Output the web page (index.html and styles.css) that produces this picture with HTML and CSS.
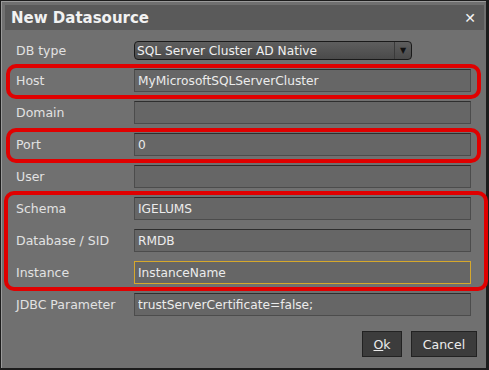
FILE: index.html
```html
<!DOCTYPE html>
<html lang="en">
<head>
    <meta charset="UTF-8">
    <title>New Datasource</title>
    <link rel="stylesheet" href="styles.css">
</head>
<body>
    <div class="dialog">
        <div class="title-bar">
            <span class="title">New Datasource</span>
            <span class="close">&#x2715;</span>
        </div>

        <form class="form">
            <div class="row row-first">
                <label>DB type</label>
                <div class="select">
                    <span class="select-text">SQL Server Cluster AD Native</span>
                    <span class="select-arrow">&#9660;</span>
                </div>
            </div>

            <div class="row mark">
                <label>Host</label>
                <input type="text" class="field" value="MyMicrosoftSQLServerCluster">
            </div>
            <div class="row">
                <label>Domain</label>
                <input type="text" class="field" value="">
            </div>
            <div class="row mark">
                <label>Port</label>
                <input type="text" class="field" value="0">
            </div>
            <div class="row">
                <label>User</label>
                <input type="text" class="field" value="">
            </div>

            <div class="group mark mark-wide">
                <div class="row">
                    <label>Schema</label>
                    <input type="text" class="field" value="IGELUMS">
                </div>
                <div class="row">
                    <label>Database / SID</label>
                    <input type="text" class="field" value="RMDB">
                </div>
                <div class="row">
                    <label>Instance</label>
                    <input type="text" class="field field-focus" value="InstanceName">
                </div>
            </div>

            <div class="row">
                <label>JDBC Parameter</label>
                <input type="text" class="field" value="trustServerCertificate=false;">
            </div>

            <div class="button-container">
                <button type="button" class="btn btn-ok"><u>O</u>k</button>
                <button type="button" class="btn btn-cancel">Cancel</button>
            </div>
        </form>
    </div>
</body>
</html>
```

FILE: styles.css
```css
/* khung hop thoai */
body {
    margin: 0;
    background: #1e1e1e;
    font-family: "DejaVu Sans", Verdana, sans-serif;
}

.dialog {
    width: 489px;
    height: 370px;
    box-sizing: border-box;
    background: #707070;
    border-top: 1px solid #1c1c1c;
    border-left: 1px solid #1c1c1c;
    border-right: 3px solid #1c1c1c;
    border-bottom: 2px solid #1c1c1c;
    box-shadow: inset 1px 1px 0 #9a9a9a;
    padding: 4px 2px 0 4px;
}

.title-bar {
    height: 25px;
    background: #5a5a5a;
    display: flex;
    align-items: center;
    justify-content: space-between;
    padding: 0 8px 0 6px;
}

.title {
    color: #f2f2f2;
    font-weight: bold;
    font-size: 15px;
}

.close {
    color: #f4f4f4;
    font-weight: bold;
    font-size: 14px;
}

.form {
    display: flex;
    flex-direction: column;
    gap: 9px;
    padding: 11px 13px 0 11px;
}

.group {
    display: flex;
    flex-direction: column;
    gap: 9px;
}

.row {
    display: flex;
    align-items: center;
    height: 23px;
}

.row-first {
    height: 19px;
}

.row label {
    width: 118px;
    flex: none;
    color: #e2e2e2;
    font-size: 12.5px;
}

.field {
    flex: 1;
    height: 23px;
    box-sizing: border-box;
    margin: 0;
    padding: 0 3px;
    background: #666666;
    border: 1px solid #4c4c4c;
    border-top-color: #2e2e2e;
    color: #ececec;
    font-family: inherit;
    font-size: 12.2px;
    outline: none;
}

.field-focus {
    border: 1px solid #d6a82c;
}

/* o chon kieu DB */
.select {
    width: 278px;
    height: 19px;
    box-sizing: border-box;
    display: flex;
    align-items: center;
    border: 1px solid #1a1a1a;
    border-radius: 4px;
    background: linear-gradient(#5e5e5e, #4a4a4a);
    color: #f0f0f0;
    font-size: 12.2px;
}

.select-text {
    flex: 1;
    padding-left: 2px;
}

.select-arrow {
    width: 16px;
    height: 17px;
    border-left: 1px solid #3a3a3a;
    display: flex;
    align-items: center;
    justify-content: center;
    color: #111;
    font-size: 8px;
}

/* khung do danh dau */
.mark {
    position: relative;
}

.mark::after {
    content: "";
    position: absolute;
    top: -5px;
    bottom: -7px;
    left: -10px;
    right: -10px;
    border: 4px solid #e00000;
    border-radius: 10px;
    pointer-events: none;
}

.mark-wide::after {
    top: -6px;
    bottom: -7px;
    left: -12px;
    right: -17px;
}

.button-container {
    display: flex;
    justify-content: flex-end;
    gap: 9px;
    margin-top: 6px;
    margin-right: -6px;
}

.btn {
    height: 26px;
    background: #3c3c3c;
    border: 1px solid #222;
    color: #ececec;
    font-family: inherit;
    font-size: 12.5px;
    padding: 0;
}

.btn-ok {
    width: 40px;
}

.btn-cancel {
    width: 66px;
}
```
